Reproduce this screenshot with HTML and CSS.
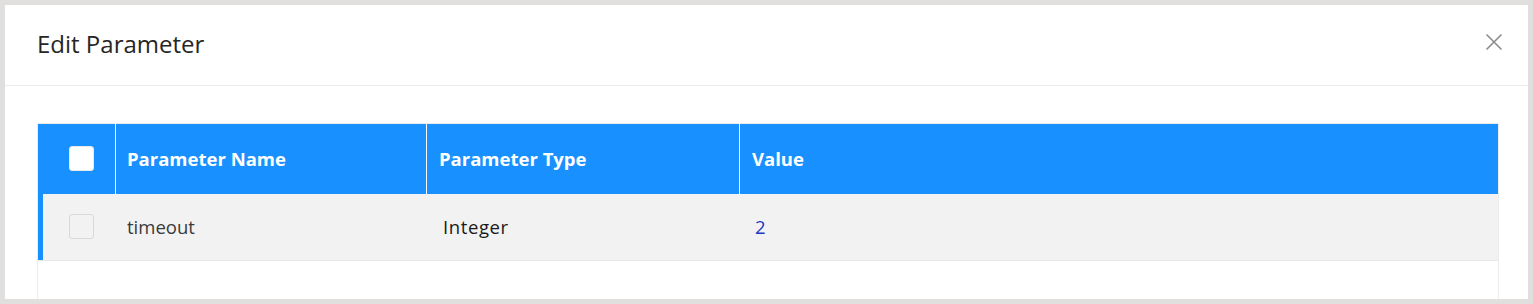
FILE: index.html
```html
<!DOCTYPE html>
<html>
<head>
<meta charset="utf-8">
<link rel="stylesheet" href="styles.css">
</head>
<body>
<div class="modal">
  <div class="modal-header">
    <h2 class="modal-title">Edit Parameter</h2>
    <button class="close" aria-label="Close">
      <svg width="18" height="18" viewBox="0 0 18 18"><path d="M1.5 1.5 L16.5 16.5 M16.5 1.5 L1.5 16.5" stroke="#8c8c8c" stroke-width="1.6" fill="none"/></svg>
    </button>
  </div>
  <div class="modal-body">
    <div class="table">
      <div class="row head">
        <div class="cell c-check"><span class="checkbox on"></span></div>
        <div class="cell c-name">Parameter Name</div>
        <div class="cell c-type">Parameter Type</div>
        <div class="cell c-value">Value</div>
      </div>
      <div class="row body-row">
        <div class="cell c-check"><span class="checkbox"></span></div>
        <div class="cell c-name">timeout</div>
        <div class="cell c-type"><span class="type">Integer</span></div>
        <div class="cell c-value"><span class="val">2</span></div>
      </div>
      <div class="filler"></div>
    </div>
  </div>
</div>
</body>
</html>
```
FILE: styles.css
```css
html, body {
  margin: 0;
  padding: 0;
}
body {
  background: #e0dfdd;
  width: 1533px;
  height: 304px;
  padding: 5px;
  box-sizing: border-box;
  overflow: hidden;
  font-family: "Open Sans", "Noto Sans", sans-serif;
}
.modal {
  background: #fff;
  width: 1523px;
  height: 294px;
  overflow: hidden;
  display: flex;
  flex-direction: column;
}
.modal-header {
  height: 80px;
  border-bottom: 1px solid #ebebeb;
  display: flex;
  align-items: center;
  justify-content: space-between;
  padding: 0 25px 0 32px;
  flex-shrink: 0;
}
.modal-title {
  margin: 0;
  font-size: 24px;
  font-weight: 400;
  color: #262626;
  position: relative;
  top: -2px;
}
.close {
  border: 0;
  background: none;
  padding: 0;
  width: 18px;
  height: 18px;
  position: relative;
  top: -3px;
}
.close svg { display: block; }
.modal-body {
  padding: 37px 29px 0 32px;
  flex: 1;
  display: flex;
  flex-direction: column;
}
.table {
  border: 1px solid #ececec;
  border-bottom: 0;
  flex: 1;
  display: flex;
  flex-direction: column;
}
.row {
  display: grid;
  grid-template-columns: 77px 311px 313px 1fr;
}
.head {
  background: #1890ff;
  height: 70px;
  color: #fff;
  font-weight: 700;
  font-size: 18.5px;
}
.head .cell + .cell {
  border-left: 1px solid #fff;
}
.cell {
  display: flex;
  align-items: center;
  padding-left: 11px;
  padding-bottom: 1px;
}
.c-check {
  padding-left: 31px;
}
.head .c-type, .head .c-value { padding-left: 12px; }
.checkbox {
  width: 25px;
  height: 25px;
  box-sizing: border-box;
  border: 1px solid #d9d9d9;
  border-radius: 3px;
  background: #f2f2f2;
}
.checkbox.on {
  background: #fff;
  border-color: #e8e8e8;
}
.body-row {
  background: #f2f2f2;
  height: 66px;
  border-bottom: 1px solid #e8e8e8;
  box-shadow: inset 5px 0 0 #1890ff;
  font-size: 18.5px;
  color: #3a3a3a;
}
.body-row .c-name { padding-left: 12px; }
.type {
  color: #1a1a1a;
  padding-left: 6px;
  font-weight: 500;
  letter-spacing: 0.6px;
}
.val {
  color: #1d39c4;
  padding-left: 5px;
}
.filler { flex: 1; }
```
